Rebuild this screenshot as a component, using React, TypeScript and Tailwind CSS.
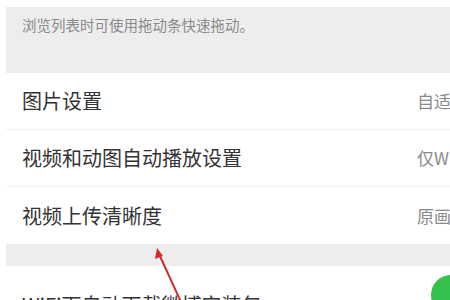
export default function App() {
  const rows = [
    { label: "图片设置", value: "自适应" },
    { label: "视频和动图自动播放设置", value: "仅WiFi" },
    { label: "视频上传清晰度", value: "原画" },
  ];

  return (
    <div
      className="relative h-[300px] w-[450px] overflow-hidden bg-white pl-[6px] pt-[7px]"
      style={{ fontFamily: '"Noto Sans CJK SC", "Noto Sans", sans-serif' }}
    >
      <div className="h-[66px] bg-[#ededed] pl-[16px] pt-[8px]">
        <p className="text-[14.5px] leading-[20px] text-[#8a8a8a] whitespace-nowrap">
          浏览列表时可使用拖动条快速拖动。
        </p>
      </div>

      <div>
        {rows.map((row, i) => (
          <div
            key={row.label}
            className={
              i < rows.length - 1
                ? "flex h-[57px] items-center justify-between border-b border-[#efefef] pl-[16px]"
                : "flex h-[57px] items-center justify-between pl-[16px]"
            }
          >
            <span className="text-[20px] text-[#333] whitespace-nowrap">{row.label}</span>
            <span className="ml-auto w-[33px] overflow-hidden text-[17px] text-[#8a8a8a] whitespace-nowrap">
              {row.value}
            </span>
          </div>
        ))}
      </div>

      <div className="h-[22px] bg-[#ededed]" />

      <div className="flex items-start justify-between pl-[16px] pt-[24px]">
        <span className="text-[20px] text-[#333] whitespace-nowrap">WiFi下自动下载微博安装包</span>
        <div className="mt-[-15px] h-[40px] w-[40px] shrink-0 translate-x-[21px] rounded-full bg-[#35c24c]" />
      </div>

      <svg
        className="pointer-events-none absolute left-0 top-0"
        width="450"
        height="300"
        viewBox="0 0 450 300"
      >
        <line x1="181" y1="302" x2="159" y2="254" stroke="#d02a2a" strokeWidth="2" />
        <polygon points="157,248 155,259 163,256" fill="#d02a2a" />
      </svg>
    </div>
  );
}
